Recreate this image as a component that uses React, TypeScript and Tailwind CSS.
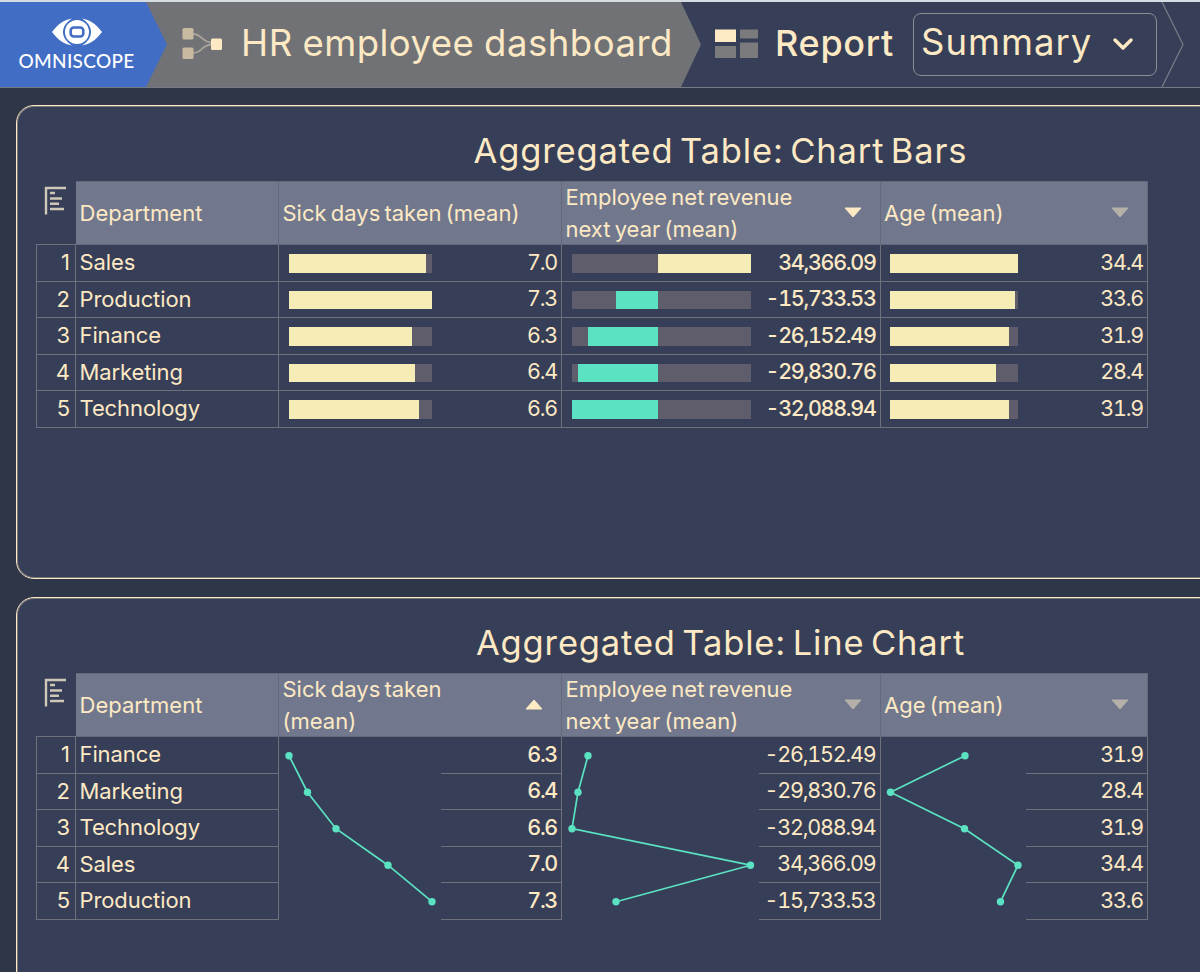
import { ChevronDown } from 'lucide-react';
import clsx from 'clsx';

type Sort = 'active-desc' | 'active-asc' | 'idle' | 'none';

interface Metric {
  label: string;
  sort: Sort;
  values: string[];
  width: string;
  chartWidth: string;
  // px extents inside the chart area, [start, end] for bars and [x] for line points
  track: number;
  bars?: [number, number][];
  points?: number[];
  labelWidth?: string;
  bold?: boolean;
}

interface TableData {
  title: string;
  departments: string[];
  metrics: Metric[];
}

const COL = {
  sick: { width: 'w-[283px]', chartWidth: 'w-[162px]', track: 143 },
  revenue: { width: 'w-[318.6px]', chartWidth: 'w-[197px]', track: 179 },
  age: { width: 'w-[267.4px]', chartWidth: 'w-[145.4px]', track: 128 },
};

const BAR_TABLE: TableData = {
  title: 'Aggregated Table: Chart Bars',
  departments: ['Sales', 'Production', 'Finance', 'Marketing', 'Technology'],
  metrics: [
    {
      ...COL.sick, label: 'Sick days taken (mean)', sort: 'none',
      values: ['7.0', '7.3', '6.3', '6.4', '6.6'],
      bars: [[0, 137], [0, 143], [0, 123], [0, 126], [0, 130]],
    },
    {
      ...COL.revenue, label: 'Employee net revenue next year (mean)', sort: 'active-desc', labelWidth: 'w-[250px]', bold: true,
      values: ['34,366.09', '-15,733.53', '-26,152.49', '-29,830.76', '-32,088.94'],
      bars: [[86, 179], [44, 86], [16, 86], [6, 86], [0, 86]],
    },
    {
      ...COL.age, label: 'Age (mean)', sort: 'idle',
      values: ['34.4', '33.6', '31.9', '28.4', '31.9'],
      bars: [[0, 128], [0, 125], [0, 119], [0, 105.5], [0, 119]],
    },
  ],
};

const LINE_TABLE: TableData = {
  title: 'Aggregated Table: Line Chart',
  departments: ['Finance', 'Marketing', 'Technology', 'Sales', 'Production'],
  metrics: [
    {
      ...COL.sick, label: 'Sick days taken (mean)', sort: 'active-asc', labelWidth: 'w-[180px]', bold: true,
      values: ['6.3', '6.4', '6.6', '7.0', '7.3'],
      points: [10, 28.5, 57, 109, 153],
    },
    {
      ...COL.revenue, label: 'Employee net revenue next year (mean)', sort: 'idle', labelWidth: 'w-[250px]',
      values: ['-26,152.49', '-29,830.76', '-32,088.94', '34,366.09', '-15,733.53'],
      points: [26, 16, 10, 188.5, 54],
    },
    {
      ...COL.age, label: 'Age (mean)', sort: 'idle',
      values: ['31.9', '28.4', '31.9', '34.4', '33.6'],
      points: [84, 9.5, 83.5, 137, 119.5],
    },
  ],
};

const ROW_H = 36.5;

export default function App() {
  return (
    <div className="w-[1200px] h-[972px] overflow-hidden bg-[#2f3647] text-[#fde9c4] font-[Inter,sans-serif]">
      <Header />
      <main className="flex flex-col w-[1409px] ml-4 mt-[17px] gap-[18px]">
        <Panel data={BAR_TABLE} />
        <Panel data={LINE_TABLE} />
      </main>
    </div>
  );
}

function Header() {
  return (
    <header className="flex h-[88px] border-t-2 border-b border-t-[#d3dde2] border-b-[#757b86] bg-[#373e57]">
      <div className="relative z-10 w-[167px] shrink-0 flex flex-col items-center pr-[14px] pt-4 bg-[#416dc5] text-white [clip-path:polygon(0_0,146px_0,100%_50%,146px_100%,0_100%)]">
        <EyeLogo />
        <span className="mt-[3px] text-[19px] leading-[23px] tracking-[0.3px] font-[Lato,sans-serif] font-medium">OMNISCOPE</span>
      </div>
      <div className="w-[555px] -ml-[21px] shrink-0 flex items-center pl-9 pb-[2px] bg-[#717275] [clip-path:polygon(0_0,535px_0,100%_50%,535px_100%,0_100%)]">
        <WorkflowIcon />
        <h1 className="ml-[17px] pb-px text-[36.5px] leading-none tracking-[0.5px] [word-spacing:-1px] whitespace-nowrap">HR employee dashboard</h1>
      </div>
      <div className="flex items-center pl-[14px] pb-px">
        <ReportIcon />
        <span className="ml-[17px] w-[118px] pb-[3px] text-[36px] leading-none tracking-[0.7px] font-medium whitespace-nowrap">Report</span>
        <button className="ml-[20px] w-[244px] h-[63px] pl-[7px] flex items-center rounded-lg border-[1.5px] border-[#8b8f94]">
          <span className="w-[170px] pb-[3px] text-left text-[36.5px] leading-none tracking-[1px] whitespace-nowrap">Summary</span>
          <ChevronDown size={32} strokeWidth={2.6} className="ml-4" />
        </button>
      </div>
      <svg width="24" height="85" viewBox="0 0 24 85" fill="none" className="ml-[4px] shrink-0">
        <path d="M1 0 L22 42.5 L1 85" stroke="#757b86" strokeWidth="1.3" />
      </svg>
    </header>
  );
}

function Panel({ data }: { data: TableData }) {
  return (
    <section className="h-[474px] shrink-0 rounded-[18px] border border-[#fde9c4] shadow-[inset_0_0_0_1px_#fde9c455] bg-[#373e57] pl-[19px]">
      <h2 className="mt-[25px] mb-[10px] -ml-[19px] text-center text-[34.5px] leading-[40px] tracking-[0.85px] [word-spacing:-4px]">{data.title}</h2>
      <div className="flex">
        <div className="w-10">
          <div className="h-16 pt-1 pl-2 border-b border-[#6e717c]"><HierarchyIcon /></div>
          {data.departments.map((d, i) => (
            <div key={d} className="h-[36.5px] pr-[5px] border-b border-x border-[#6e717c] text-right text-[22px] leading-[34px]">{i + 1}</div>
          ))}
        </div>
        <div className="w-[203px]">
          <HeadCell label="Department" sort="none" />
          {data.departments.map(d => (
            <div key={d} className="h-[36.5px] pl-[3.5px] border-b border-r border-[#6e717c] text-[22px] leading-[34px] tracking-[-0.1px]">{d}</div>
          ))}
        </div>
        {data.metrics.map(m => <MetricColumn key={m.label} metric={m} />)}
      </div>
    </section>
  );
}

function HeadCell({ label, sort, labelWidth }: { label: string; sort: Sort; labelWidth?: string }) {
  return (
    <div className="h-16 pl-[3.5px] flex items-center justify-between border border-l-0 border-[#646a7c] bg-[#71788d]">
      <span className={clsx('text-[22px] leading-8 [word-spacing:-2px]', labelWidth)}>{label}</span>
      {sort !== 'none' && (
        <svg width="18" height="11" viewBox="0 0 18 11" className={clsx('mr-[18px] mb-px shrink-0', sort === 'idle' ? 'text-[#b5b1a9]' : 'text-[#fde9c4]')}>
          <path
            d={sort === 'active-asc' ? 'M1 10 L9 1 L17 10 Z' : 'M1 1 L17 1 L9 10 Z'}
            fill="currentColor" stroke="currentColor" strokeLinejoin="round"
          />
        </svg>
      )}
    </div>
  );
}

function MetricColumn({ metric: m }: { metric: Metric }) {
  return (
    <div className={m.width}>
      <HeadCell label={m.label} sort={m.sort} labelWidth={m.labelWidth} />
      {m.bars && m.values.map((v, i) => (
        <div key={i} className="h-[36.5px] pl-[9.8px] pr-1 flex items-center justify-between border-b border-r border-[#6e717c]">
          <Bar track={m.track} range={m.bars![i]} negative={v.startsWith('-')} />
          <Value text={v} bold={m.bold} />
        </div>
      ))}
      {m.points && (
        <div className="flex">
          <LineChart points={m.points} className={m.chartWidth} />
          <div className="flex-1 border-r border-[#6e717c]">
            {m.values.map((v, i) => (
              <div key={i} className="h-[36.5px] pr-1 flex items-center justify-end border-b border-[#6e717c]">
                <Value text={v} bold={m.bold} />
              </div>
            ))}
          </div>
        </div>
      )}
    </div>
  );
}

function Value({ text, bold }: { text: string; bold?: boolean }) {
  return (
    <span className={clsx('text-[21.5px] leading-[34px] pb-[2px] tabular-nums', bold ? 'font-medium tracking-[-1.3px]' : 'tracking-[-1.2px]')}>
      {text}
    </span>
  );
}

function Bar({ track, range: [from, to], negative }: { track: number; range: [number, number]; negative: boolean }) {
  return (
    <div className="h-[18.5px] mt-px bg-[#5f5c6c]" style={{ width: track }}>
      <div className={clsx('h-full', negative ? 'bg-[#5ae2c2]' : 'bg-[#f5ecb6]')} style={{ marginLeft: from, width: to - from }} />
    </div>
  );
}

function LineChart({ points, className }: { points: number[]; className: string }) {
  const coords = points.map((x, i) => [x, 18.7 + i * ROW_H]);
  return (
    <svg height={ROW_H * 5} className={clsx('shrink-0', className)}>
      <polyline points={coords.map(c => c.join(',')).join(' ')} fill="none" stroke="#5ae2c2" strokeWidth="1.7" />
      {coords.map(([x, y], i) => <circle key={i} cx={x} cy={y} r="3.7" fill="#5ae2c2" />)}
    </svg>
  );
}

function EyeLogo() {
  return (
    <svg width="52" height="28" viewBox="0 0 52 28">
      <path d="M1 14 C7 6 13 2 21 0.5 C9 8 9 20 21 27.5 C13 26 7 22 1 14 Z" fill="white" />
      <path d="M51 14 C45 6 39 2 31 0.5 C43 8 43 20 31 27.5 C39 26 45 22 51 14 Z" fill="white" />
      <circle cx="26" cy="14" r="12" fill="white" />
      <rect x="19.7" y="9.5" width="12.6" height="9" rx="3" fill="white" stroke="#416dc5" strokeWidth="2.6" />
    </svg>
  );
}

function WorkflowIcon() {
  return (
    <svg width="42" height="34" viewBox="0 0 42 34" fill="none" className="shrink-0">
      <path d="M11 7 C20 7 20 15.5 30 15.5 M11 26 C20 26 20 17.5 30 17.5" stroke="#a9a39a" strokeWidth="1.8" />
      <rect x="0.5" y="1" width="11" height="11.5" rx="1.5" fill="#c7baa1" />
      <rect x="0.5" y="20.5" width="11" height="11.5" rx="1.5" fill="#c7baa1" />
      <rect x="29" y="11.5" width="11" height="11.5" rx="1.5" fill="#fde9c4" />
    </svg>
  );
}

function ReportIcon() {
  return (
    <svg width="43" height="30" viewBox="0 0 43 30" className="shrink-0">
      <rect x="0" y="0.5" width="21" height="12.5" fill="#fde9c4" />
      <rect x="25" y="0.5" width="18" height="9" fill="#7b7b7d" />
      <rect x="0" y="17" width="21" height="12" fill="#7b7b7d" />
      <rect x="25" y="13.5" width="18" height="15.5" fill="#7b7b7d" />
    </svg>
  );
}

function HierarchyIcon() {
  return (
    <svg width="24" height="30" viewBox="0 0 24 30" fill="none" stroke="#cfc8b8">
      <path d="M2 29.5 V3 H22" strokeWidth="2.4" />
      <path d="M6 8 H11 M6 13.5 H18 M6 18.7 H15 M6 24 H20" strokeWidth="2.4" />
    </svg>
  );
}
